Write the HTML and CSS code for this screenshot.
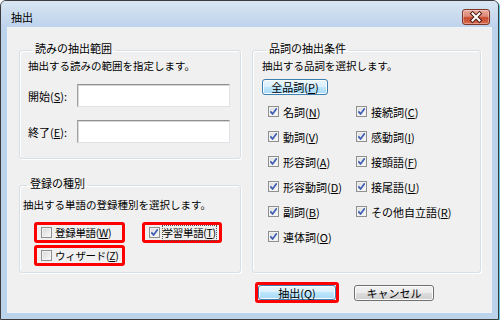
FILE: index.html
```html
<!DOCTYPE html>
<html lang="ja">
<head>
    <meta charset="UTF-8">
    <title>抽出</title>
    <link rel="stylesheet" href="styles.css">
</head>
<body>

    <!-- Dialog window -->
    <div class="window">
        <div class="titlebar">
            <span class="title">抽出</span>
            <span class="close">
                <svg width="26" height="14" viewBox="0 0 26 14">
                    <path d="M9.5 3.5 L16.5 10.5 M16.5 3.5 L9.5 10.5" stroke="#4a1a10" stroke-width="4" stroke-linecap="square" fill="none"/>
                    <path d="M9.5 3.5 L16.5 10.5 M16.5 3.5 L9.5 10.5" stroke="#fff" stroke-width="2" stroke-linecap="square" fill="none"/>
                </svg>
            </span>
        </div>

        <div class="client">
            <div class="columns">
                <div class="left">
                    <!-- Reading range -->
                    <fieldset class="group group-range">
                        <legend>読みの抽出範囲</legend>
                        <p class="desc">抽出する読みの範囲を指定します。</p>
                        <div class="field">
                            <label for="start">開始(<u>S</u>):</label>
                            <input type="text" id="start" class="text">
                        </div>
                        <div class="field">
                            <label for="end">終了(<u>E</u>):</label>
                            <input type="text" id="end" class="text">
                        </div>
                    </fieldset>

                    <!-- Registration kind -->
                    <fieldset class="group group-kind">
                        <legend>登録の種別</legend>
                        <p class="desc">抽出する単語の登録種別を選択します。</p>
                        <div class="kind-grid">
                            <div class="mark check"><span class="cb"></span><span>登録単語(<u>W</u>)</span></div>
                            <div class="mark check"><span class="cb on"></span><span class="focus">学習単語(<u>T</u>)</span></div>
                            <div class="mark check"><span class="cb"></span><span>ウィザード(<u>Z</u>)</span></div>
                        </div>
                    </fieldset>
                </div>

                <!-- Part of speech -->
                <fieldset class="group group-pos">
                    <legend>品詞の抽出条件</legend>
                    <p class="desc">抽出する品詞を選択します。</p>
                    <button type="button" class="btn btn-blue btn-all">全品詞(<u>P</u>)</button>
                    <div class="pos-grid">
                        <div class="check"><span class="cb on"></span><span>名詞(<u>N</u>)</span></div>
                        <div class="check"><span class="cb on"></span><span>接続詞(<u>C</u>)</span></div>
                        <div class="check"><span class="cb on"></span><span>動詞(<u>V</u>)</span></div>
                        <div class="check"><span class="cb on"></span><span>感動詞(<u>I</u>)</span></div>
                        <div class="check"><span class="cb on"></span><span>形容詞(<u>A</u>)</span></div>
                        <div class="check"><span class="cb on"></span><span>接頭語(<u>F</u>)</span></div>
                        <div class="check"><span class="cb on"></span><span>形容動詞(<u>D</u>)</span></div>
                        <div class="check"><span class="cb on"></span><span>接尾語(<u>U</u>)</span></div>
                        <div class="check"><span class="cb on"></span><span>副詞(<u>B</u>)</span></div>
                        <div class="check"><span class="cb on"></span><span>その他自立語(<u>R</u>)</span></div>
                        <div class="check"><span class="cb on"></span><span>連体詞(<u>O</u>)</span></div>
                    </div>
                </fieldset>
            </div>

            <!-- Buttons -->
            <div class="actions">
                <div class="mark"><button type="button" class="btn btn-blue btn-ok">抽出(Q)</button></div>
                <button type="button" class="btn btn-cancel">キャンセル</button>
            </div>
        </div>
    </div>

</body>
</html>
```

FILE: styles.css
```css
/* Reset */
* { margin: 0; padding: 0; box-sizing: border-box; }

body { background: #fff; font-family: "Noto Sans CJK JP", "Noto Sans", sans-serif; font-size: 11px; line-height: 14px; color: #000; }

/* Window frame */
.window {
    width: 499px;
    height: 320px;
    border: 1px solid #3c3c3c;
    border-radius: 6px 6px 0 0;
    background: #bcd3ec;
    box-shadow: 1px 1px 0 #5cc6e6;
    display: flex;
    flex-direction: column;
}

.titlebar {
    height: 26px;
    padding: 6px 8px 0 10px;
    display: flex;
    align-items: center;
    justify-content: space-between;
    background: linear-gradient(#d9e5f2, #bdd3ec);
    border-radius: 5px 5px 0 0;
}

.title { font-size: 11px; color: #000; }

.close {
    width: 28px;
    height: 16px;
    border: 1px solid #7d3427;
    border-radius: 3px;
    background: linear-gradient(#e9a99b 0%, #dd8a78 45%, #c84a30 55%, #d76a4c 100%);
    box-shadow: inset 0 0 0 1px rgba(255, 255, 255, 0.35);
    display: flex;
    align-items: center;
    justify-content: center;
}

/* Client area */
.client {
    flex: 1;
    margin: 0 6px 6px;
    border: 1px solid #eef3f8;
    background: #f0f0f0;
    padding: 13px 10px 0 11px;
}

.columns { display: flex; gap: 11px; }

.left { width: 222px; flex: none; }

/* Group boxes */
.group {
    border: 1px solid #d5dfe5;
    border-radius: 3px;
    box-shadow: inset 1px 1px 0 #fff, 1px 1px 0 #fff;
    min-width: 0;
}

.group legend {
    margin-left: 4px;
    padding: 0 3px 4px;
    font-size: 11px;
    line-height: 14px;
}

.desc { font-size: 10.5px; line-height: 13px; white-space: nowrap; }

.group-range { padding: 0 0 15px 8px; }

.field { display: flex; align-items: center; margin-top: 12px; }
.field + .field { margin-top: 13px; }

.field label { width: 49px; }

.text {
    width: 153px;
    height: 23px;
    border: 1px solid #dfe3e8;
    border-top-color: #8e8f8f;
    border-left-color: #a3a3a3;
    box-shadow: inset 1px 1px 0 #d8d8d8;
    background: #fff;
}

.group-kind { margin-top: 17px; padding: 0 0 6px 3px; }
.group-kind .desc { margin-top: 4px; }

.kind-grid {
    display: grid;
    grid-template-columns: repeat(2, max-content);
    column-gap: 17px;
    row-gap: 2px;
    margin: 11px 0 0 11px;
}

/* Red highlight boxes */
.mark {
    border: 3px solid #f00;
    border-radius: 3px;
}

.kind-grid .mark { height: 21px; padding: 0 3px 0 4px; font-size: 10.5px; letter-spacing: -0.3px; }

/* Check boxes */
.check { display: flex; align-items: center; gap: 3px; white-space: nowrap; }

.cb {
    width: 11px;
    height: 11px;
    border: 1px solid #8e8f8f;
    background: linear-gradient(135deg, #d6d6d6, #fbfbfb);
    box-shadow: inset 0 0 0 1px #f2f2f2;
    flex: none;
}

.cb.on {
    background:
        url("data:image/svg+xml,%3Csvg xmlns='http://www.w3.org/2000/svg' width='9' height='9' viewBox='0 0 9 9'%3E%3Cpath d='M1.3 4.4 L3.6 6.9 L7.8 1.2' stroke='%233c5db4' stroke-width='1.7' fill='none'/%3E%3C/svg%3E") center / 9px 9px no-repeat,
        linear-gradient(135deg, #dcdcdc, #fbfbfb);
}

.focus { outline: 1px dotted #555; outline-offset: 0; }

.group-pos { flex: none; width: 229px; padding: 0 0 0 9px; }

.btn-all { margin-top: 7px; width: 66px; height: 17px; }

.pos-grid {
    display: grid;
    grid-template-columns: 88px auto;
    grid-auto-rows: 25px;
    margin: 4px 0 0 6px;
}

.pos-grid .check { gap: 4px; }

/* Push buttons */
.btn {
    font-family: inherit;
    font-size: 11px;
    line-height: 14px;
    color: #000;
    height: 16px;
    border: 1px solid #707070;
    border-radius: 3px;
    background: linear-gradient(#f2f2f2 0%, #ebebeb 50%, #dddddd 50%, #cfcfcf 100%);
    box-shadow: inset 0 0 0 1px #fbfbfb;
}

.btn-blue {
    border-color: #3c7fb1;
    background: linear-gradient(#eaf6fd 0%, #d9f0fc 50%, #bee6fd 50%, #a7d9f5 100%);
}

.actions {
    display: flex;
    justify-content: flex-end;
    align-items: center;
    gap: 15px;
    margin-top: 9px;
    padding-right: 47px;
}

.actions .mark { display: flex; }

.btn-ok { width: 78px; height: 15px; display: block; }

.btn-cancel { width: 80px; }
```
